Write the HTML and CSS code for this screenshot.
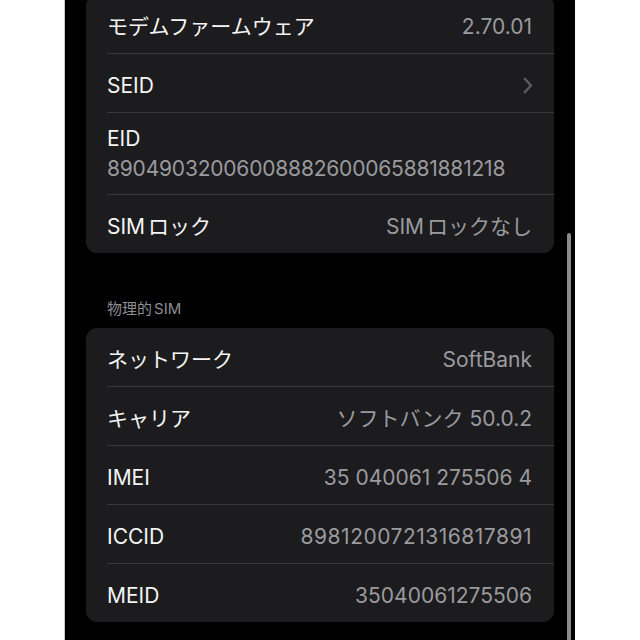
FILE: index.html
```html
<!DOCTYPE html>
<html lang="ja">
<head>
<meta charset="utf-8">
<link rel="stylesheet" href="styles.css">
</head>
<body>
<div class="screen">
  <div class="card card-first">
    <div class="row"><div class="row-body"><span class="label">モデムファームウェア</span><span class="value">2.70.01</span></div></div>
    <div class="row"><div class="row-body sep"><span class="label">SEID</span>
      <svg class="chev" width="10" height="17" viewBox="0 0 10 17"><path d="M1.8 1.8 L8 8.5 L1.8 15.2" fill="none" stroke="#5c5c60" stroke-width="2.4" stroke-linecap="round" stroke-linejoin="round"/></svg>
    </div></div>
    <div class="row"><div class="row-body sep stack"><span class="label">EID</span><span class="value">89049032006008882600065881881218</span></div></div>
    <div class="row"><div class="row-body sep"><span class="label">SIM<span class="jp">ロック</span></span><span class="value">SIM<span class="jp">ロックなし</span></span></div></div>
  </div>

  <div class="section-title">物理的<span class="lat">SIM</span></div>

  <div class="card">
    <div class="row"><div class="row-body"><span class="label">ネットワーク</span><span class="value">SoftBank</span></div></div>
    <div class="row"><div class="row-body sep"><span class="label">キャリア</span><span class="value">ソフトバンク 50.0.2</span></div></div>
    <div class="row"><div class="row-body sep"><span class="label">IMEI</span><span class="value">35 040061 275506 4</span></div></div>
    <div class="row"><div class="row-body sep"><span class="label">ICCID</span><span class="value wide">8981200721316817891</span></div></div>
    <div class="row"><div class="row-body sep"><span class="label">MEID</span><span class="value">35040061275506</span></div></div>
  </div>

  <div class="scrollbar"></div>
</div>
</body>
</html>
```

FILE: styles.css
```css
html, body {
  margin: 0;
  padding: 0;
  background: #ffffff;
}
body {
  font-family: "Inter", "Noto Sans CJK JP", sans-serif;
}
.screen {
  position: relative;
  margin-left: 64px;
  width: 468px;
  height: 640px;
  background: #000000;
  border-left: 1px solid #c8c8c8;
  overflow: hidden;
  padding: 0 21px;
}
.card {
  background: #1c1c1e;
  border-radius: 11px;
}
.card-first {
  margin-top: -5px;
}
.row {
  padding-left: 21px;
}
.row-body {
  display: flex;
  align-items: center;
  justify-content: space-between;
  height: 58px;
  padding-right: 22px;
}
.row-body.sep {
  border-top: 1px solid #38383a;
}
.row-body > .label,
.row-body > .value {
  padding-top: 6px;
}
.row-body.stack {
  flex-direction: column;
  align-items: flex-start;
  justify-content: center;
  height: 81px;
  gap: 1px;
}
.row-body.stack > .label,
.row-body.stack > .value {
  padding-top: 1px;
}
.label {
  color: #f4f4f5;
  font-size: 21px;
  line-height: 28px;
}
.value {
  color: #9a9a9f;
  font-size: 21px;
  line-height: 28px;
}
.stack .value {
  letter-spacing: -0.2px;
}
.value.wide {
  letter-spacing: 0.5px;
}
.jp {
  margin-left: 3px;
}
.lat {
  margin-left: 2px;
}
.chev {
  display: block;
  margin-right: -1px;
  margin-top: 4px;
}
.section-title {
  color: #8d8d92;
  font-size: 15px;
  line-height: 20px;
  padding: 46px 0 9px 21px;
}
.scrollbar {
  position: absolute;
  left: 502px;
  top: 233px;
  width: 4px;
  height: 420px;
  border-radius: 2px;
  background: #8a8a8c;
}
```
